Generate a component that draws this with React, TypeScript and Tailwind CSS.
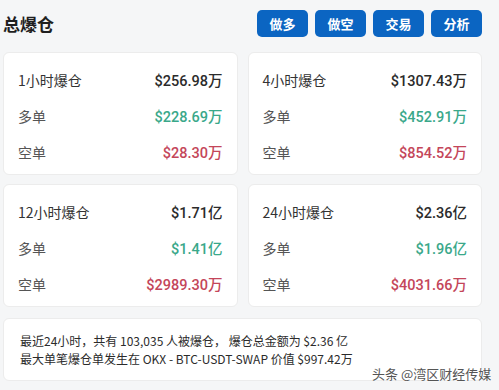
import React from 'react';

type Row = { label: string; value: string; tone: 'main' | 'long' | 'short' };
type Block = { rows: Row[] };

const blocks: Block[] = [
  {
    rows: [
      { label: '1小时爆仓', value: '$256.98万', tone: 'main' },
      { label: '多单', value: '$228.69万', tone: 'long' },
      { label: '空单', value: '$28.30万', tone: 'short' },
    ],
  },
  {
    rows: [
      { label: '4小时爆仓', value: '$1307.43万', tone: 'main' },
      { label: '多单', value: '$452.91万', tone: 'long' },
      { label: '空单', value: '$854.52万', tone: 'short' },
    ],
  },
  {
    rows: [
      { label: '12小时爆仓', value: '$1.71亿', tone: 'main' },
      { label: '多单', value: '$1.41亿', tone: 'long' },
      { label: '空单', value: '$2989.30万', tone: 'short' },
    ],
  },
  {
    rows: [
      { label: '24小时爆仓', value: '$2.36亿', tone: 'main' },
      { label: '多单', value: '$1.96亿', tone: 'long' },
      { label: '空单', value: '$4031.66万', tone: 'short' },
    ],
  },
];

const toneClass = {
  main: 'text-[#2b2b2b]',
  long: 'text-[#3aa88a]',
  short: 'text-[#c4465a]',
};

function StatCard({ block }: { block: Block }) {
  return (
    <div className="h-[123px] rounded-md bg-white border border-[#ececec] px-[14px] pt-[10px]">
      {block.rows.map((r, i) => (
        <div key={i} className="h-[36px] flex items-center">
          <div className="flex w-full items-baseline justify-between">
            <span className={i === 0 ? 'text-[14px] text-[#333]' : 'text-[14px] text-[#555]'}>{r.label}</span>
            <span className={`text-[14.5px] font-medium font-['Roboto','Noto_Sans_CJK_SC',sans-serif] ${toneClass[r.tone]}`}>
              {r.value}
            </span>
          </div>
        </div>
      ))}
    </div>
  );
}

export default function App() {
  const actions = ['做多', '做空', '交易', '分析'];

  return (
    <div className="relative w-[499px] h-[390px] overflow-hidden bg-[#f5f6f7] pl-[3px] pr-[17px] font-['Noto_Sans_CJK_SC','Noto_Sans',sans-serif]">
      <header className="flex items-center justify-between pt-[10px] h-[37px]">
        <h1 className="text-[17px] font-bold text-[#1f1f1f] leading-none">总爆仓</h1>
        <div className="flex gap-[7px]">
          {actions.map((a) => (
            <button
              key={a}
              type="button"
              className="w-[51px] h-[27px] rounded-[5px] bg-[#0b65c2] text-white text-[13px] font-bold leading-none"
            >
              {a}
            </button>
          ))}
        </div>
      </header>

      <div className="grid grid-cols-2 gap-x-[10px] gap-y-[9px] mt-[15px]">
        {blocks.map((b, i) => (
          <StatCard key={i} block={b} />
        ))}
      </div>

      <div className="mt-[11px] h-[63px] rounded-md bg-white border border-[#ececec] px-[16px] pt-[13px] text-[12px] leading-[18px] text-[#2b2b2b]">
        <p>最近24小时，共有 103,035 人被爆仓， 爆仓总金额为 $2.36 亿</p>
        <p>最大单笔爆仓单发生在 OKX - BTC-USDT-SWAP 价值 $997.42万</p>
      </div>

      <span className="absolute left-[372px] top-[364px] whitespace-nowrap text-[13px] text-[#555] [text-shadow:0_0_2px_#fff,0_0_2px_#fff]">
        头条 @湾区财经传媒
      </span>
    </div>
  );
}
